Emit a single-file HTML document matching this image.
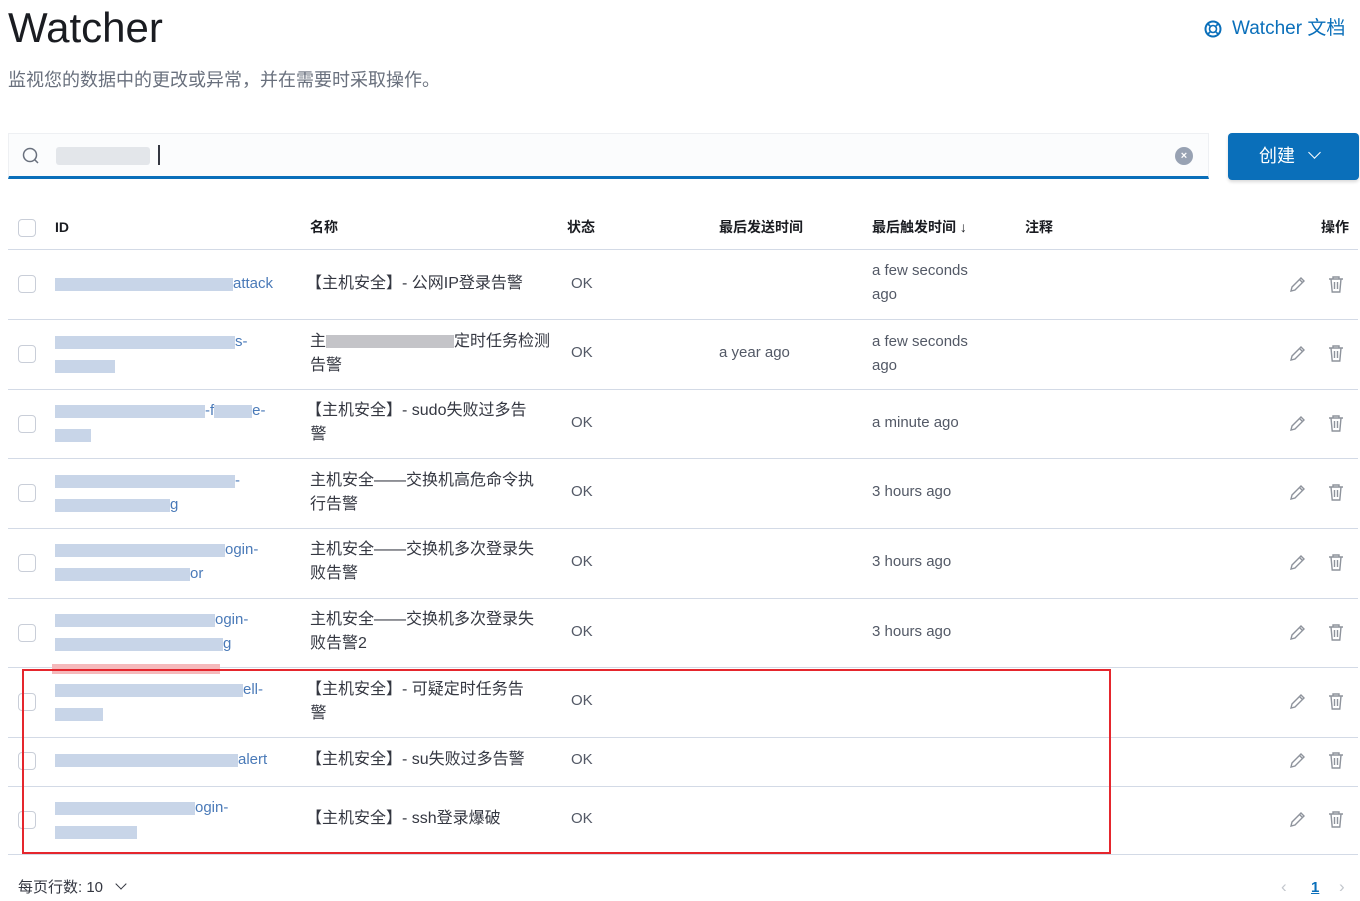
<!DOCTYPE html>
<html><head><meta charset="utf-8"><style>
*{box-sizing:border-box;margin:0;padding:0}
body{width:1360px;height:901px;background:#fff;position:relative;overflow:hidden;font-family:"Liberation Sans","Noto Sans CJK SC",sans-serif;color:#343741}
.a{position:absolute;white-space:nowrap}
.t{font-size:15px;line-height:24px}
.n{font-size:16px;line-height:24px}
.hd{font-size:14px;font-weight:bold;color:#1a1c21;top:218px;line-height:18px}
.line{position:absolute;left:8px;width:1350px;height:1px;background:#d3dae6}
.cb{position:absolute;left:18px;width:18px;height:18px;border:1px solid #c9ced8;border-radius:4px;background:#fff}
.id{color:#4a7ab8}
.b{display:inline-block;height:13px;background:#c8d5e8;vertical-align:middle}
.ok{left:571px}
.gr{color:#535966}
svg{position:absolute}
</style></head><body>
<div class="a" style="left:8px;top:3px;font-size:42px;line-height:50px;color:#1a1c21;font-weight:300">Watcher</div>
<div class="a" style="left:8px;top:67px;font-size:18px;line-height:26px;color:#69707d">监视您的数据中的更改或异常，并在需要时采取操作。</div>
<svg style="left:1203px;top:19px" width="20" height="20" viewBox="0 0 20 20"><circle cx="10" cy="10" r="7.5" fill="none" stroke="#0a6fba" stroke-width="2"/><circle cx="10" cy="10" r="3.5" fill="none" stroke="#0a6fba" stroke-width="1.6"/><path d="M4 4l3.5 3.5M16 4l-3.5 3.5M4 16l3.5-3.5M16 16l-3.5-3.5" stroke="#0a6fba" stroke-width="1.6"/></svg>
<div class="a" style="left:1232px;top:16px;font-size:19px;line-height:26px;color:#0a6fba">Watcher 文档</div>

<div class="a" style="left:8px;top:133px;width:1201px;height:46px;background:#fbfcfd;border:1px solid #eef0f3;border-bottom:3px solid #0a6fba"></div>
<svg style="left:21px;top:146px" width="20" height="20" viewBox="0 0 20 20"><circle cx="9" cy="9" r="6.5" fill="none" stroke="#69707d" stroke-width="1.5"/><path d="M13.5 13.5l3.5 3.5" stroke="#69707d" stroke-width="1.5"/></svg>
<div class="a" style="left:56px;top:147px;width:94px;height:18px;background:#e3e6ea;border-radius:3px"></div>
<div class="a" style="left:158px;top:145px;width:2px;height:20px;background:#343741"></div>
<div class="a" style="left:1175px;top:147px;width:18px;height:18px;border-radius:50%;background:#98a2b3;color:#fff;font-size:11px;line-height:18px;text-align:center;font-weight:bold">×</div>
<div class="a" style="left:1228px;top:133px;width:131px;height:47px;background:#0a6fba;border-radius:4px;color:#fff;font-size:18px;line-height:47px;padding-left:31px;box-shadow:0 2px 3px rgba(0,0,0,.15)">创建 <span style="display:inline-block;width:9px;height:9px;border-right:1.6px solid #fff;border-bottom:1.6px solid #fff;transform:rotate(45deg);margin:0 0 5px 10px"></span></div>

<div class="cb" style="top:219px"></div>
<div class="a hd" style="left:55px">ID</div>
<div class="a hd" style="left:310px">名称</div>
<div class="a hd" style="left:567px">状态</div>
<div class="a hd" style="left:719px">最后发送时间</div>
<div class="a hd" style="left:872px">最后触发时间 <span style="font-weight:normal">↓</span></div>
<div class="a hd" style="left:1025px">注释</div>
<div class="a hd" style="left:1321px">操作</div>

<div class="line" style="top:249px"></div><div class="line" style="top:319px"></div><div class="line" style="top:389px"></div><div class="line" style="top:458px"></div><div class="line" style="top:528px"></div><div class="line" style="top:598px"></div><div class="line" style="top:667px"></div><div class="line" style="top:737px"></div><div class="line" style="top:786px"></div><div class="line" style="top:854px"></div>

<div class="cb" style="top:275px"></div>
<div class="a t id" style="left:55px;top:272px"><span class="b" style="width:178px"></span>attack</div>
<div class="a n" style="left:306px;top:272px">【主机安全】- 公网IP登录告警</div>
<div class="a t ok gr" style="top:272px">OK</div>
<div class="a t gr" style="left:872px;top:259px">a few seconds<br>ago</div>

<div class="cb" style="top:345px"></div>
<div class="a t id" style="left:55px;top:330px"><span class="b" style="width:180px"></span>s-<br><span class="b" style="width:60px"></span></div>
<div class="a n" style="left:310px;top:330px">主<span class="b" style="width:128px;background:#c4c4c8"></span>定时任务检测<br>告警</div>
<div class="a t ok gr" style="top:341px">OK</div>
<div class="a t gr" style="left:719px;top:341px">a year ago</div>
<div class="a t gr" style="left:872px;top:330px">a few seconds<br>ago</div>

<div class="cb" style="top:415px"></div>
<div class="a t id" style="left:55px;top:399px"><span class="b" style="width:150px"></span>-f<span class="b" style="width:38px"></span>e-<br><span class="b" style="width:36px"></span></div>
<div class="a n" style="left:306px;top:399px">【主机安全】- sudo失败过多告<br>&nbsp;警</div>
<div class="a t ok gr" style="top:411px">OK</div>
<div class="a t gr" style="left:872px;top:411px">a minute ago</div>

<div class="cb" style="top:484px"></div>
<div class="a t id" style="left:55px;top:469px"><span class="b" style="width:180px"></span>-<br><span class="b" style="width:115px"></span>g</div>
<div class="a n" style="left:310px;top:469px">主机安全——交换机高危命令执<br>行告警</div>
<div class="a t ok gr" style="top:480px">OK</div>
<div class="a t gr" style="left:872px;top:480px">3 hours ago</div>

<div class="cb" style="top:554px"></div>
<div class="a t id" style="left:55px;top:538px"><span class="b" style="width:170px"></span>ogin-<br><span class="b" style="width:135px"></span>or</div>
<div class="a n" style="left:310px;top:538px">主机安全——交换机多次登录失<br>败告警</div>
<div class="a t ok gr" style="top:550px">OK</div>
<div class="a t gr" style="left:872px;top:550px">3 hours ago</div>

<div class="cb" style="top:624px"></div>
<div class="a t id" style="left:55px;top:608px"><span class="b" style="width:160px"></span>ogin-<br><span class="b" style="width:168px"></span>g</div>
<div class="a n" style="left:310px;top:608px">主机安全——交换机多次登录失<br>败告警2</div>
<div class="a t ok gr" style="top:620px">OK</div>
<div class="a t gr" style="left:872px;top:620px">3 hours ago</div>
<div class="a" style="left:52px;top:664px;width:168px;height:10px;background:#f5b9bb"></div>

<div class="cb" style="top:693px"></div>
<div class="a t id" style="left:55px;top:678px"><span class="b" style="width:188px"></span>ell-<br><span class="b" style="width:48px"></span></div>
<div class="a n" style="left:306px;top:678px">【主机安全】- 可疑定时任务告<br>&nbsp;警</div>
<div class="a t ok gr" style="top:689px">OK</div>

<div class="cb" style="top:752px"></div>
<div class="a t id" style="left:55px;top:748px"><span class="b" style="width:183px"></span>alert</div>
<div class="a n" style="left:306px;top:748px">【主机安全】- su失败过多告警</div>
<div class="a t ok gr" style="top:748px">OK</div>

<div class="cb" style="top:811px"></div>
<div class="a t id" style="left:55px;top:796px"><span class="b" style="width:140px"></span>ogin-<br><span class="b" style="width:82px"></span></div>
<div class="a n" style="left:306px;top:807px">【主机安全】- ssh登录爆破</div>
<div class="a t ok gr" style="top:807px">OK</div>

<div class="a" style="left:22px;top:669px;width:1089px;height:185px;border:2px solid #e5262d"></div>

<svg width="0" height="0"><defs>
<g id="pen"><path d="M3 16l1-4L13 3l3 3-9 9z M11.5 4.5l3 3" fill="none" stroke="#8e939c" stroke-width="1.4"/></g>
<g id="tr"><path d="M2 5h14M6 5V3h6v2M4 5l1.2 13h7.6L14 5M7.5 8v7M10.5 8v7" fill="none" stroke="#8e939c" stroke-width="1.4"/></g>
</defs></svg>
<svg style="left:1288px;top:275px" width="20" height="20"><use href="#pen"/></svg><svg style="left:1327px;top:274px" width="18" height="20"><use href="#tr"/></svg>
<svg style="left:1288px;top:344px" width="20" height="20"><use href="#pen"/></svg><svg style="left:1327px;top:343px" width="18" height="20"><use href="#tr"/></svg>
<svg style="left:1288px;top:414px" width="20" height="20"><use href="#pen"/></svg><svg style="left:1327px;top:413px" width="18" height="20"><use href="#tr"/></svg>
<svg style="left:1288px;top:483px" width="20" height="20"><use href="#pen"/></svg><svg style="left:1327px;top:482px" width="18" height="20"><use href="#tr"/></svg>
<svg style="left:1288px;top:553px" width="20" height="20"><use href="#pen"/></svg><svg style="left:1327px;top:552px" width="18" height="20"><use href="#tr"/></svg>
<svg style="left:1288px;top:623px" width="20" height="20"><use href="#pen"/></svg><svg style="left:1327px;top:622px" width="18" height="20"><use href="#tr"/></svg>
<svg style="left:1288px;top:692px" width="20" height="20"><use href="#pen"/></svg><svg style="left:1327px;top:691px" width="18" height="20"><use href="#tr"/></svg>
<svg style="left:1288px;top:751px" width="20" height="20"><use href="#pen"/></svg><svg style="left:1327px;top:750px" width="18" height="20"><use href="#tr"/></svg>
<svg style="left:1288px;top:810px" width="20" height="20"><use href="#pen"/></svg><svg style="left:1327px;top:809px" width="18" height="20"><use href="#tr"/></svg>

<div class="a" style="left:18px;top:877px;font-size:15px;line-height:22px;color:#343741">每页行数: 10 <span style="display:inline-block;width:8px;height:8px;border-right:1.5px solid #343741;border-bottom:1.5px solid #343741;transform:rotate(45deg);margin:0 0 4px 10px"></span></div>
<div class="a" style="left:1281px;top:876px;font-size:17px;line-height:22px;color:#c2c6cc">‹</div>
<div class="a" style="left:1311px;top:877px;font-size:15px;line-height:22px;color:#0a6fba;font-weight:bold;text-decoration:underline">1</div>
<div class="a" style="left:1339px;top:876px;font-size:17px;line-height:22px;color:#c2c6cc">›</div>
</body></html>
